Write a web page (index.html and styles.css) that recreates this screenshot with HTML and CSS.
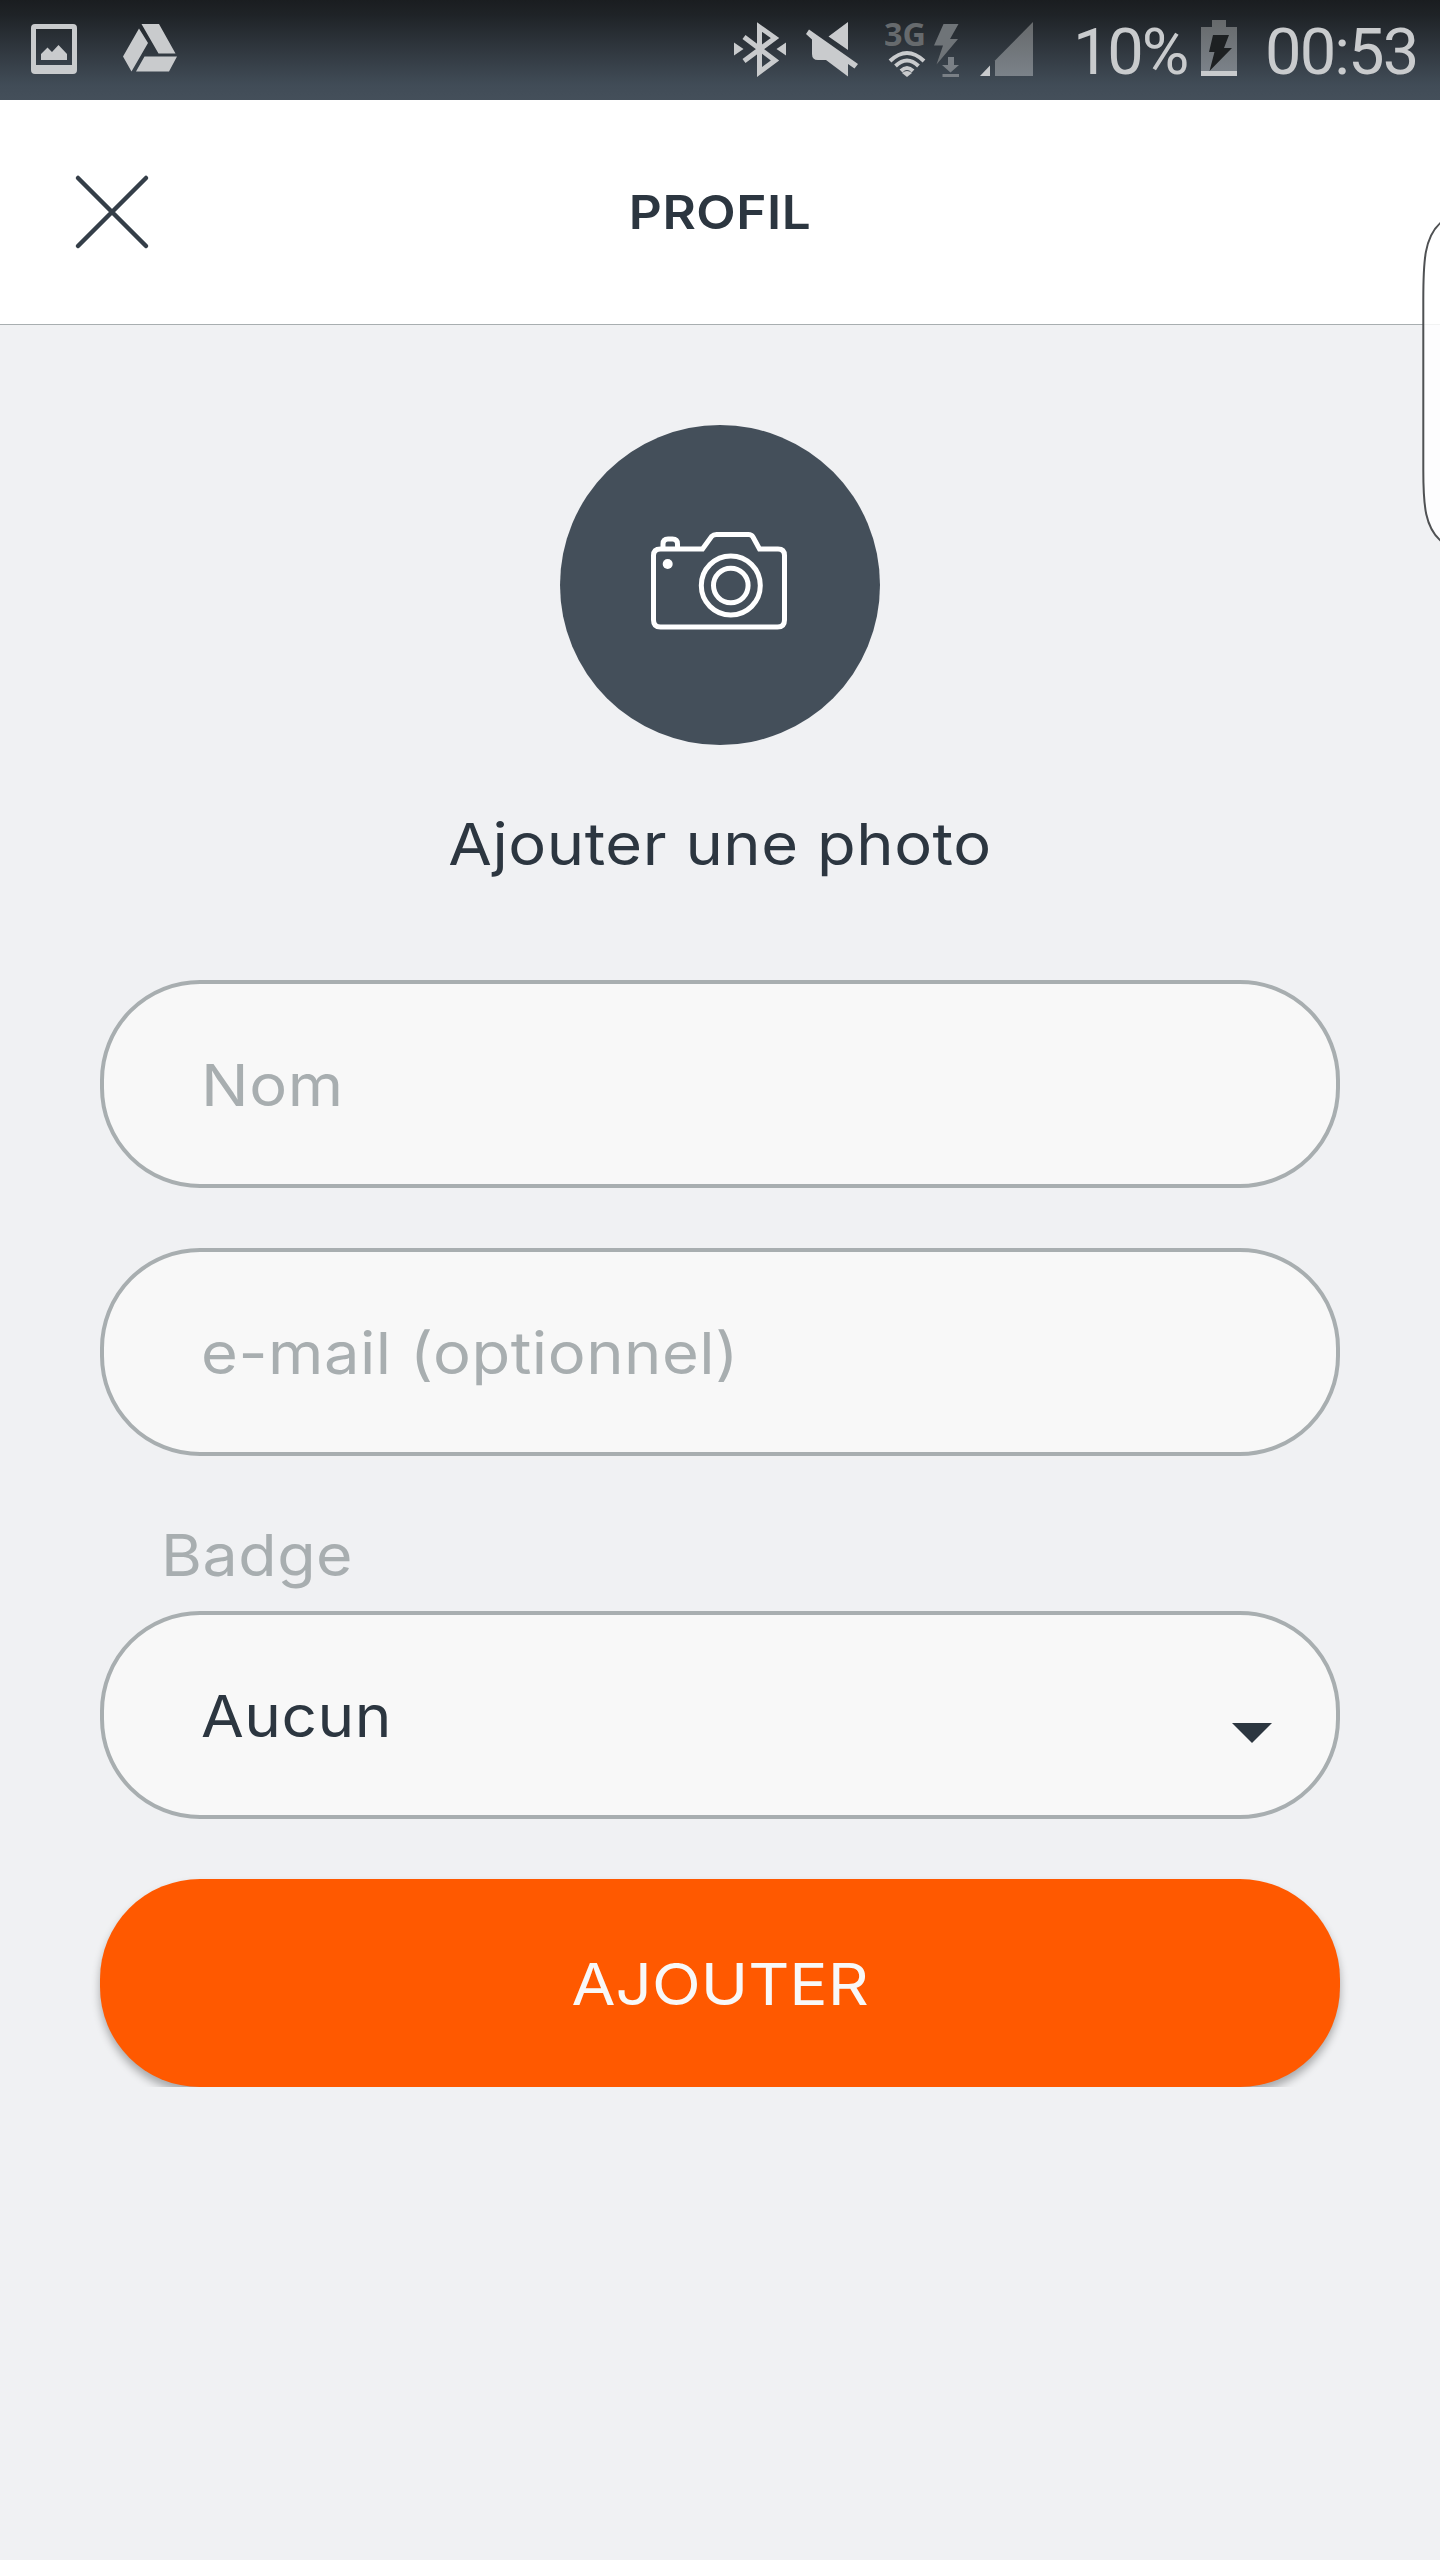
FILE: index.html
```html
<!DOCTYPE html>
<html lang="fr">
<head>
    <meta charset="UTF-8">
    <meta name="viewport" content="width=device-width, initial-scale=1.0">
    <title>Profil</title>
    <link rel="stylesheet" href="styles.css">
</head>
<body>

    <!-- Barre de statut -->
    <div class="status-bar">
        <svg class="icon-image" width="46" height="100" viewBox="31 0 46 100">
            <path fill="#c9cbcd" fill-rule="evenodd" d="M35 24h38q4 0 4 4v42q0 4-4 4H35q-4 0-4-4V28q0-4 4-4zM36 29v36h36V29z"/>
            <path fill="#c9cbcd" d="M41 60v-6l6.500-6.500 4.500 4.500 6.500-7 8.500 9v6z"/>
        </svg>
        <svg class="icon-drive" width="54" height="100" viewBox="123 0 54 100">
            <path fill="#c9cbcd" d="M141.500 24h17.500l16.500 29.500h-17zM139 28.500l9 14.500-16.500 28.500-8.500-15zM144.500 56.500H177L169 71.500h-33z"/>
        </svg>
        <svg class="icon-bluetooth" width="52" height="100" viewBox="734 0 52 100">
            <path fill="none" stroke="#c9cbcd" stroke-width="5" d="M744 37l31 23.500L759.500 72V27L775 38 744 61"/>
            <path fill="#c9cbcd" d="M734 42.500v13l9.500-6.500zM786 42.500v13L776.500 49z"/>
        </svg>
        <svg class="icon-mute" width="52" height="100" viewBox="806 0 52 100">
            <path fill="#c9cbcd" d="M848 22v28l-19.500-13.500zM809 29.500l49 34.500-3.500 4.500-6.500-4.500v12.500L826 60h-8q-6 0-6-6V39.500L806 34z"/>
        </svg>
        <svg class="icon-network" width="74" height="100" viewBox="885 0 74 100">
            <text class="network-label" x="884" y="46" textLength="42" lengthAdjust="spacingAndGlyphs">3G</text>
            <g fill="none" stroke="#c9cbcd" stroke-width="4">
                <path d="M890 61q17-16 34 0M895.500 66q11.500-11 23 0M901 71q6-6 12 0"/>
            </g>
            <path fill="#c9cbcd" d="M902 73q5-4 10 0l-5 4z"/>
            <path fill="#6f7478" d="M943.500 24H958.500L950 39h8l-21.500 25.500 6.500-19h-9z"/>
            <path fill="#7a8086" d="M948 57h6v8h5l-8.500 7.500-8.500-7.500h6zM942.500 74H959v3h-16.500z"/>
        </svg>
        <svg class="icon-signal" width="53" height="100" viewBox="980 0 53 100">
            <defs>
                <linearGradient id="signalFill" x1="0" y1="0" x2="0" y2="1">
                    <stop offset="0" stop-color="#66696b"/>
                    <stop offset="1" stop-color="#7b8289"/>
                </linearGradient>
            </defs>
            <path fill="#c9cbcd" d="M980 76l10-10.500V76z"/>
            <path fill="url(#signalFill)" d="M1033 22v54h-38V60.500z"/>
        </svg>
        <span class="battery-level">10%</span>
        <svg class="icon-battery" width="36" height="100" viewBox="1201 0 36 100">
            <path fill="url(#signalFill)" d="M1212 20h14v7h11v44h-36V27h11z"/>
            <path fill="#c9cbcd" d="M1201 71h36v5h-36z"/>
            <path fill="#1d2022" d="M1213 35h16l-5 13h8l-22.500 23 5-19h-5.500z"/>
        </svg>
        <span class="clock">00:53</span>
    </div>

    <!-- En-tête -->
    <header class="header">
        <button class="close" type="button" aria-label="Fermer">
            <svg width="76" height="76" viewBox="0 0 76 76">
                <path d="M4 4l68 68M72 4L4 72" fill="none" stroke="#343e48" stroke-width="4.500" stroke-linecap="round"/>
            </svg>
        </button>
        <h1>Profil</h1>
    </header>

    <form class="container">
        <button class="photo" type="button">
            <svg width="320" height="320" viewBox="560 425 320 320">
                <g fill="none" stroke="#fff" stroke-width="5">
                    <path d="M660.500 549h42l9-12.500q2-2 5-2h32q3 0 4.500 2.500l6.500 12h18.500q6.500 0 6.500 6.500V620q0 7-7 7h-57.500-59.500q-7 0-7-7v-64.500q0-6.500 7-6.500z"/>
                    <path d="M663 549v-5q0-5 5-5h4.500q5 0 5 5v5"/>
                    <circle cx="730.800" cy="585.500" r="29.500"/>
                    <circle cx="730.800" cy="585.500" r="17.300"/>
                </g>
                <circle cx="667.700" cy="564" r="5" fill="#fff"/>
            </svg>
        </button>
        <p class="photo-label">Ajouter une photo</p>

        <div class="field">
            <input class="field-text" type="text" placeholder="Nom">
        </div>
        <div class="field field-email">
            <input class="field-text" type="text" placeholder="e-mail (optionnel)">
        </div>

        <label class="badge-label">Badge</label>
        <div class="field select">
            <span class="select-value">Aucun</span>
            <svg class="arrow" width="40" height="20" viewBox="0 0 40 20">
                <path d="M0 0h40L20 20z" fill="#2c3640"/>
            </svg>
        </div>

        <div class="submit-wrap">
            <button class="btn" type="button"><span class="btn-text">Ajouter</span></button>
        </div>
    </form>

    <!-- Poignée du panneau latéral -->
    <svg class="edge-panel" width="20" height="324" viewBox="1420 220 20 324">
        <path d="M1442 221.500C1424 236 1423.300 262 1423.300 300V470C1423.300 506 1425 528 1442 542" fill="#fff" fill-opacity="0.85" stroke="#4f5153" stroke-width="2"/>
    </svg>

</body>
</html>
```
FILE: styles.css
```css
* {
    box-sizing: border-box;
}

body {
    position: relative;
    margin: 0;
    min-height: 2560px;
    background: #f0f1f3;
    color: #2c3640;
    font-family: Inter, "Liberation Sans", sans-serif;
    overflow-x: hidden;
}

svg {
    display: block;
    flex: none;
}

button {
    font-family: inherit;
    border: none;
    padding: 0;
    cursor: pointer;
}

/* Barre de statut */
.status-bar {
    display: flex;
    height: 100px;
    padding-left: 31px;
    background: linear-gradient(#1a1d20 0%, #1f2327 15%, #414c57 85%, #444f5a 100%);
    color: #c9cbcd;
    font-family: Roboto, sans-serif;
    font-size: 65px;
    line-height: 104px;
    white-space: nowrap;
}

.icon-drive {
    margin-left: 46px;
}

.icon-bluetooth {
    margin-left: 557px;
}

.icon-mute {
    margin-left: 20px;
}

.icon-network {
    margin-left: 27px;
}

.icon-signal {
    margin-left: 21px;
}

.network-label {
    font-family: "Noto Sans", sans-serif;
    font-size: 33px;
    font-weight: bold;
    fill: #666a6d;
}

.battery-level {
    width: 128px;
    margin-left: 40px;
    letter-spacing: -2.2px;
}

.clock {
    margin-left: 28px;
    letter-spacing: -1.9px;
}

/* En-tête */
.header {
    display: flex;
    align-items: center;
    height: 225px;
    padding: 0 74px;
    background: #fff;
    border-bottom: 1px solid #a8aeb0;
}

.close {
    width: 76px;
    height: 76px;
    background: none;
}

h1 {
    flex: 1;
    margin: 0 76px 0 0;
    font-size: 47px;
    font-weight: 600;
    line-height: 60px;
    letter-spacing: 0.5px;
    text-align: center;
    text-transform: uppercase;
    transform: scaleX(1.09);
}

/* Formulaire */
.container {
    display: flex;
    flex-direction: column;
    padding: 100px 100px 0;
}

.photo {
    align-self: center;
    width: 320px;
    height: 320px;
    border-radius: 50%;
    background: #444f5a;
}

.photo-label {
    margin: 59px 0 96px;
    font-size: 58px;
    line-height: 80px;
    letter-spacing: 0.5px;
    text-align: center;
    transform: scaleX(1.09);
}

.field {
    display: flex;
    align-items: center;
    height: 208px;
    padding: 2px 97px 0;
    border: 4px solid #a8aeb0;
    border-radius: 100px;
    background: #f8f8f8;
    font-size: 58px;
    letter-spacing: 0.5px;
}

.field-text {
    width: 90%;
    padding: 0;
    border: none;
    outline: none;
    background: none;
    color: #2c3640;
    font: inherit;
    letter-spacing: inherit;
    transform: scaleX(1.09);
    transform-origin: left;
}

.field-text::placeholder {
    color: #a8aeb0;
    opacity: 1;
}

.field-email {
    margin-top: 60px;
}

.badge-label {
    margin: 59px 0 16px 61px;
    color: #a8aeb0;
    font-size: 58px;
    line-height: 80px;
    letter-spacing: 0.5px;
    transform: scaleX(1.08);
    transform-origin: left;
}

.select {
    justify-content: space-between;
    padding-right: 64px;
}

.select-value {
    transform: scaleX(1.07);
    transform-origin: left;
}

.arrow {
    margin-top: 34px;
}

/* L'ombre est coupée au bas du bouton */
.submit-wrap {
    margin: 52px -20px 0;
    padding: 8px 20px 0;
    overflow: hidden;
}

.btn {
    display: block;
    width: 100%;
    height: 208px;
    padding-top: 2px;
    border-radius: 100px;
    background: #ff5900;
    color: #f8f8f8;
    font-size: 58px;
    text-transform: uppercase;
    box-shadow: 0 6px 8px rgba(0, 0, 0, 0.3);
}

.btn-text {
    display: inline-block;
    transform: scaleX(1.1);
}

.edge-panel {
    position: absolute;
    top: 220px;
    right: 0;
}
```
